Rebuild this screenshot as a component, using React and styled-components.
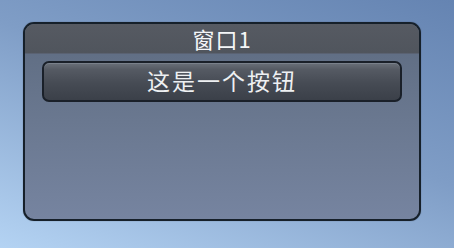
import React from 'react';
import styled, { createGlobalStyle } from 'styled-components';

const GlobalStyle = createGlobalStyle`
  html, body {
    margin: 0;
    padding: 0;
  }
  body {
    width: 454px;
    height: 248px;
    overflow: hidden;
    font-family: "Noto Sans CJK SC", "Noto Sans", sans-serif;
  }
`;

const Desktop = styled.div`
  width: 454px;
  height: 248px;
  box-sizing: border-box;
  padding: 22px 33px 27px 23px;
  background: linear-gradient(200deg, #6584b2 0%, #7f9dc6 45%, #b4d3f3 100%);
`;

const Window = styled.div`
  height: 100%;
  box-sizing: border-box;
  border: 2px solid #16202a;
  border-radius: 11px;
  overflow: hidden;
  display: flex;
  flex-direction: column;
  background: linear-gradient(180deg, #5d6b80 0%, #6a7890 50%, #7684a0 100%);
  box-shadow: 0 0 1px rgba(20, 30, 40, 0.6);
`;

const TitleBar = styled.div`
  height: 30px;
  flex-shrink: 0;
  display: flex;
  align-items: center;
  justify-content: center;
  background: linear-gradient(180deg, #565a62 0%, #50555d 100%);
  border-bottom: 1px solid #5a6272;
  color: #f4f6f8;
  font-size: 22px;
  letter-spacing: 1px;
  line-height: 1;
  padding-bottom: 2px;
  box-sizing: border-box;
`;

const Body = styled.div`
  flex: 1;
  padding: 7px 17px 0 17px;
`;

const Button = styled.button`
  width: 100%;
  height: 41px;
  box-sizing: border-box;
  border: 2px solid #1a2029;
  border-radius: 7px;
  background: linear-gradient(180deg, #6a7079 0%, #555a63 18%, #464b54 55%, #3b4049 100%);
  box-shadow: inset 0 1px 0 rgba(140, 148, 160, 0.5);
  color: #eef0f2;
  font-family: "Noto Sans CJK SC", "Noto Sans", sans-serif;
  font-size: 23px;
  letter-spacing: 2px;
  line-height: 1;
  padding: 0 0 2px 0;
  display: flex;
  align-items: center;
  justify-content: center;
`;

export default function App() {
  return (
    <>
      <GlobalStyle />
      <Desktop>
        <Window>
          <TitleBar>窗口1</TitleBar>
          <Body>
            <Button>这是一个按钮</Button>
          </Body>
        </Window>
      </Desktop>
    </>
  );
}
